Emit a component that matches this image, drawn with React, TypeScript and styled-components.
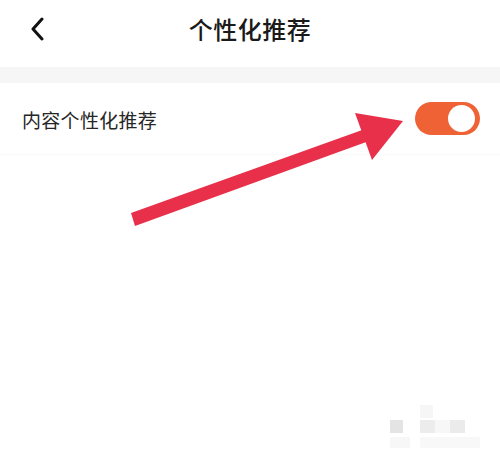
import styled, { createGlobalStyle } from "styled-components";

const GlobalStyle = createGlobalStyle`
  html, body {
    margin: 0;
    padding: 0;
    background: #ffffff;
  }
  body {
    font-family: "Noto Sans CJK SC", "Noto Sans", sans-serif;
  }
`;

const Page = styled.div`
  position: relative;
  width: 500px;
  height: 458px;
  overflow: hidden;
  background: #ffffff;
`;

const Header = styled.div`
  height: 67px;
  display: grid;
  grid-template-columns: 60px 1fr 60px;
  align-items: center;
`;

const BackButton = styled.div`
  display: flex;
  align-items: center;
  justify-content: flex-start;
  padding-left: 30px;
  padding-bottom: 10px;
`;

const Title = styled.div`
  text-align: center;
  font-size: 24px;
  font-weight: 500;
  color: #1a1a1a;
  padding-bottom: 10px;
  letter-spacing: 0.5px;
`;

const GrayBand = styled.div`
  height: 16px;
  background: #f6f6f6;
`;

const SettingRow = styled.div`
  height: 72px;
  display: flex;
  align-items: center;
  justify-content: space-between;
  padding: 2px 20px 0 22px;
  box-sizing: border-box;
  border-bottom: 1px solid #fafafa;
`;

const Label = styled.div`
  font-size: 19px;
  color: #262626;
  letter-spacing: 0.3px;
`;

const Toggle = styled.div<{ $on: boolean }>`
  width: 65px;
  height: 33px;
  border-radius: 17px;
  background: ${(p) => (p.$on ? "#ef6236" : "#d9d9d9")};
  display: flex;
  align-items: center;
  justify-content: ${(p) => (p.$on ? "flex-end" : "flex-start")};
  padding: 0 5px;
  box-sizing: border-box;
  margin-bottom: 2px;
`;

const Knob = styled.div`
  width: 27px;
  height: 27px;
  border-radius: 50%;
  background: #ffffff;
`;

const ArrowLayer = styled.svg`
  position: absolute;
  left: 0;
  top: 0;
  pointer-events: none;
`;

const Watermark = styled.div<{ $x: number; $y: number; $w: number; $h: number; $c: string }>`
  position: absolute;
  left: ${(p) => p.$x}px;
  top: ${(p) => p.$y}px;
  width: ${(p) => p.$w}px;
  height: ${(p) => p.$h}px;
  background: ${(p) => p.$c};
`;

const marks = [
  { x: 390, y: 420, w: 13, h: 13, c: "#e4e4e4" },
  { x: 420, y: 405, w: 13, h: 13, c: "#f6f6f6" },
  { x: 420, y: 420, w: 15, h: 13, c: "#ececec" },
  { x: 435, y: 420, w: 15, h: 13, c: "#f7f7f7" },
  { x: 450, y: 420, w: 15, h: 13, c: "#ebebeb" },
  { x: 390, y: 437, w: 20, h: 11, c: "#f7f7f7" },
  { x: 420, y: 437, w: 60, h: 11, c: "#f8f8f8" },
];

export default function App() {
  return (
    <Page>
      <GlobalStyle />
      <Header>
        <BackButton>
          <svg width="14" height="24" viewBox="0 0 14 24">
            <path
              d="M12 2 L3 12 L12 22"
              fill="none"
              stroke="#111"
              strokeWidth="3"
              strokeLinecap="round"
              strokeLinejoin="round"
            />
          </svg>
        </BackButton>
        <Title>个性化推荐</Title>
        <div />
      </Header>
      <GrayBand />
      <SettingRow>
        <Label>内容个性化推荐</Label>
        <Toggle $on>
          <Knob />
        </Toggle>
      </SettingRow>

      <ArrowLayer width="500" height="458" viewBox="0 0 500 458">
        <polygon
          points="131,213 365,129 369,141 135,226"
          fill="#e8304a"
        />
        <polygon points="355,113 403,121 372,160" fill="#e8304a" />
      </ArrowLayer>

      {marks.map((m, i) => (
        <Watermark key={i} $x={m.x} $y={m.y} $w={m.w} $h={m.h} $c={m.c} />
      ))}
    </Page>
  );
}
